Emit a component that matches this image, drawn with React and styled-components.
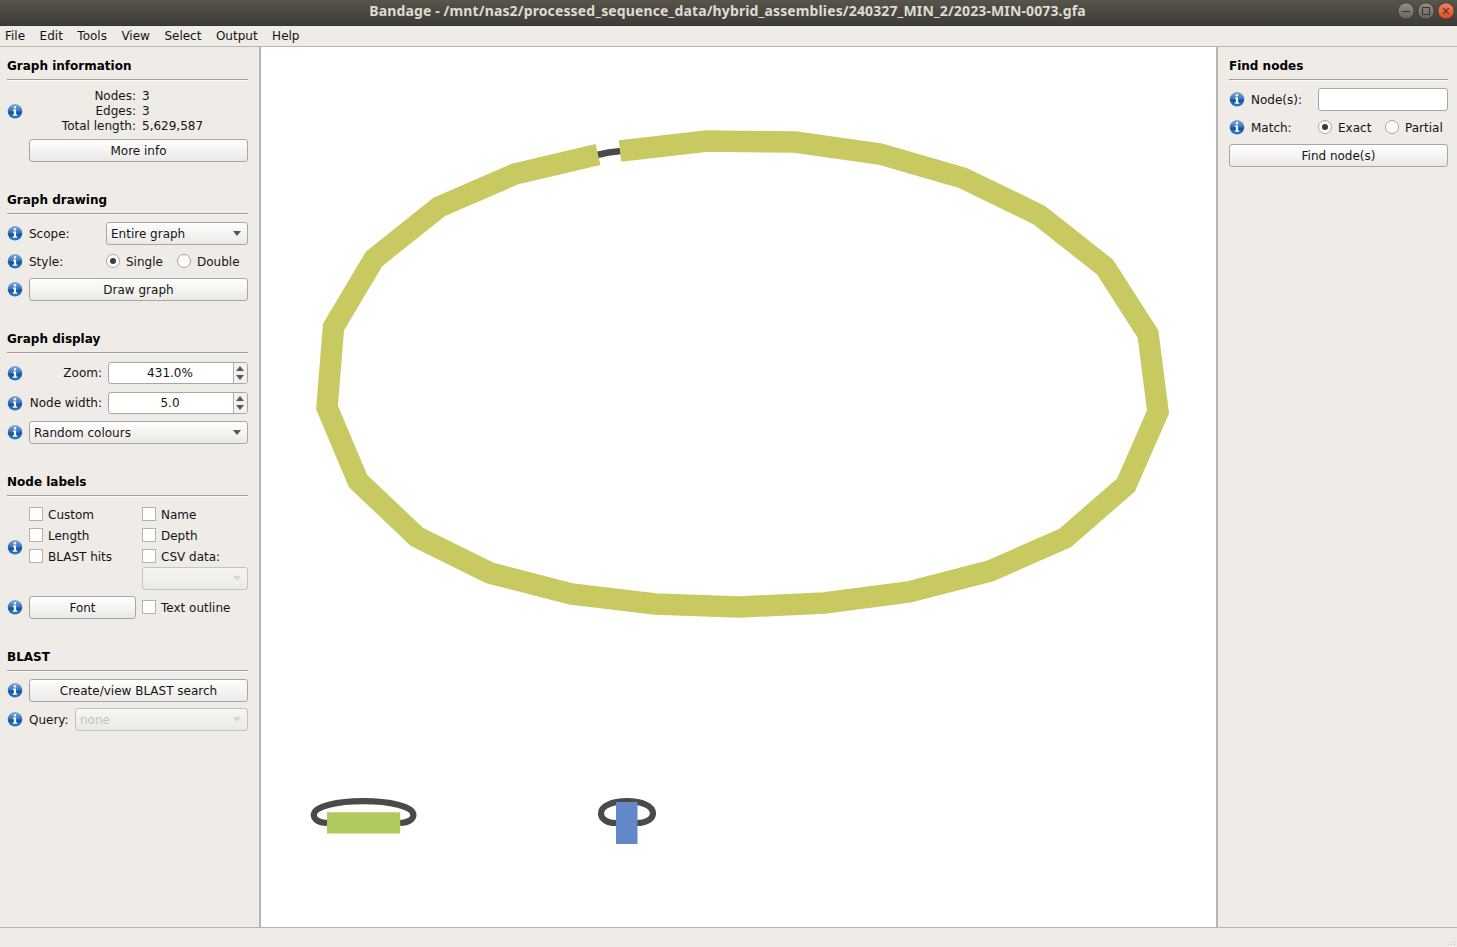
import React from 'react';
import styled, { createGlobalStyle, css } from 'styled-components';

const GlobalStyle = createGlobalStyle`
  * { box-sizing: border-box; }
  body {
    margin: 0;
    background: #efebe7;
    color: #141414;
    font: 12px/15px 'DejaVu Sans', sans-serif;
  }
`;

const Window = styled.div`
  display: flex;
  flex-direction: column;
  width: 1457px;
  height: 947px;
  overflow: hidden;
  background: #efebe7;
`;

const TitleBar = styled.header`
  display: grid;
  grid-template-columns: 58px 1fr 60px;
  align-items: center;
  flex: none;
  height: 26px;
  padding-bottom: 4px;
  background: linear-gradient(#57544b, #3e3c37);
  border-bottom: 1px solid #35332e;
`;

const Title = styled.h1`
  grid-column: 2;
  margin: 0;
  text-align: center;
  white-space: nowrap;
  color: #dfdbd2;
  font: 700 14px/22px 'Noto Sans', sans-serif;
  letter-spacing: 0.13px;
`;

const WindowButtons = styled.div`
  display: flex;
  gap: 2px;
`;

const MenuBar = styled.nav`
  display: flex;
  flex: none;
  align-items: center;
  gap: 14.5px;
  height: 21px;
  padding: 1px 5px 0;
  border-bottom: 1px solid #b8b4ae;
`;

const Body = styled.main`
  display: flex;
  flex: 1;
  min-height: 0;
`;

const SidePanel = styled.aside`
  display: flex;
  flex-direction: column;
  gap: 19px;
  flex: none;
  width: ${(p) => p.$width}px;
  padding: 0 ${(p) => p.$right}px 0 ${(p) => p.$left}px;
  border: 0 solid #b9b5b0;
  ${(p) => (p.$side === 'left' ? 'border-right-width: 2px;' : 'border-left-width: 2px;')}
`;

const Canvas = styled.section`
  flex: 1;
  min-width: 0;
  background: #fff;
  svg { display: block; }
`;

const StatusBar = styled.footer`
  display: flex;
  flex: none;
  justify-content: flex-end;
  align-items: flex-end;
  height: 20px;
  border-top: 1px solid #b8b4ae;
`;

const Group = styled.section`
  display: flex;
  flex-direction: column;
`;

const GroupTitle = styled.h2`
  height: 34px;
  margin: 0;
  padding-top: 12px;
  font: 700 12px/15px 'DejaVu Sans', sans-serif;
  color: #000;
  border-bottom: 1px solid #fbfaf8;
  box-shadow: inset 0 -1px 0 #a09c97;
`;

const Rows = styled.div`
  display: flex;
  flex-direction: column;
  gap: ${(p) => p.$gap ?? 5}px;
  padding-top: ${(p) => p.$top ?? 7}px;
`;

const Option = styled.span`
  display: flex;
  align-items: center;
  gap: ${(p) => p.$gap ?? 6}px;
  height: 14px;
  white-space: nowrap;
`;

const OptionText = styled.span`
  padding-top: 2px;
`;

const Row = styled.div`
  display: grid;
  grid-template-columns: ${(p) => p.$cols || '22px 1fr'};
  align-items: center;
  height: ${(p) => p.$h || 23}px;
  & > ${Option} { margin-bottom: 1px; }
`;

const Label = styled.span`
  white-space: nowrap;
  text-align: ${(p) => p.$align || 'left'};
  padding-top: ${(p) => (p.$align === 'right' ? 1 : 2)}px;
  padding-right: ${(p) => (p.$align === 'right' ? 6 : 0)}px;
`;

const face = css`
  height: 23px;
  border: 1px solid ${(p) => (p.$disabled ? '#c6c2bd' : '#aaa6a1')};
  border-radius: 3px;
  background: ${(p) =>
    p.$disabled ? 'linear-gradient(#f6f5f3, #eceae7)' : 'linear-gradient(#fefefe, #f6f5f4 45%, #ebe9e7)'};
  color: ${(p) => (p.$disabled ? '#c4c1bd' : '#141414')};
  font: 12px/15px 'DejaVu Sans', sans-serif;
`;

const Button = styled.button`
  ${face}
  width: 100%;
  padding: 2px 0 0;
  text-align: center;
`;

const SelectBox = styled.div`
  ${face}
  display: flex;
  align-items: center;
  justify-content: space-between;
  padding: 0 6px 0 4px;
`;

const Field = styled.div`
  display: flex;
  height: ${(p) => p.$h || 22}px;
  border: 1px solid #aaa6a1;
  border-radius: 3px;
  background: #fff;
  overflow: hidden;
`;

const FieldValue = styled.span`
  flex: 1;
  padding-right: 2px;
  text-align: center;
  line-height: 21px;
`;

const Stepper = styled.span`
  display: flex;
  flex-direction: column;
  justify-content: space-around;
  align-items: center;
  width: 14px;
  padding: 1px 1px 1px 0;
  border-left: 1px solid #b3afaa;
  background: #f3f1ef;
`;

const Stats = styled.dl`
  display: grid;
  grid-template-columns: 107px 1fr;
  column-gap: 6px;
  margin: 0;
  padding-top: 1px;
  dt { text-align: right; }
  dd { margin: 0; }
`;

const StatsRow = styled.div`
  display: grid;
  grid-template-columns: 22px 1fr;
  align-items: center;
`;

const RadioMark = styled.i`
  display: grid;
  place-items: center;
  width: 14px;
  height: 14px;
  border: 1px solid #aaa6a1;
  border-radius: 50%;
  background: #fff;
  &::after {
    content: '';
    width: 6px;
    height: 6px;
    border-radius: 50%;
    background: ${(p) => (p.$on ? '#3c3c3c' : 'transparent')};
  }
`;

const CheckMark = styled.i`
  width: 14px;
  height: 14px;
  border: 1px solid #b5b1ac;
  background: #fff;
`;

const InfoSvg = styled.svg`
  margin-bottom: 1px;
`;

const LabelOptions = styled.div`
  display: grid;
  grid-template-columns: 22px 1fr;
  align-items: center;
  padding-top: 3px;
  & > ${InfoSvg} { margin: -3px 0 0; }
`;

const OptionGrid = styled.div`
  display: grid;
  grid-template-columns: 113px 1fr;
  row-gap: 7px;
`;

const CsvSelect = styled(SelectBox)`
  grid-column: 2;
  margin-top: -3px;
`;

const InfoIcon = () => (
  <InfoSvg width="16" height="16" viewBox="0 0 16 16">
    <defs>
      <linearGradient id="info" x1="0" y1="0" x2="0" y2="1">
        <stop offset="0" stopColor="#86add9" />
        <stop offset="0.48" stopColor="#3672b8" />
        <stop offset="0.56" stopColor="#0f549f" />
        <stop offset="1" stopColor="#2f80c6" />
      </linearGradient>
    </defs>
    <circle cx="8" cy="8.3" r="7.2" fill="url(#info)" />
    <rect x="6.8" y="3.200" width="2.3" height="2.2" rx="0.6" fill="#fff" />
    <path d="M5.900 6.500h3.200v4.900h1.200v1.300H5.700v-1.300h1.200V7.800h-1z" fill="#fff" />
  </InfoSvg>
);

const Arrow = ({ up, faded }) => (
  <svg width="8" height="5" viewBox="0 0 8 4" preserveAspectRatio="none">
    <path d={up ? 'M0 4L4 0L8 4Z' : 'M0 0H8L4 4Z'} fill={faded ? '#dad7d3' : '#595653'} />
  </svg>
);

const WindowIcon = ({ kind }) => {
  const close = kind === 'close';
  return (
    <svg width="18" height="18" viewBox="0 0 18 18">
      <defs>
        <linearGradient id={`win-${kind}`} x1="0" y1="0" x2="0" y2="1">
          <stop offset="0" stopColor={close ? '#f58460' : '#929087'} />
          <stop offset="1" stopColor={close ? '#df4a1b' : '#66645c'} />
        </linearGradient>
      </defs>
      <circle cx="9" cy="9" r="8.2" fill={`url(#win-${kind})`} stroke="#34322d" strokeWidth="0.8" />
      <g fill="none" stroke="#393631" strokeWidth="1.1">
        {kind === 'min' && <path d="M5 9.500h8" />}
        {kind === 'max' && <path d="M5.500 5.500h7v7h-7z" />}
        {close && <path d="M6.200 6.200l5.600 5.600M11.800 6.200l-5.600 5.600" />}
      </g>
    </svg>
  );
};

const Select = ({ children, disabled }) => (
  <SelectBox $disabled={disabled}>
    <OptionText>{children}</OptionText>
    <Arrow faded={disabled} />
  </SelectBox>
);

const Spin = ({ value }) => (
  <Field>
    <FieldValue>{value}</FieldValue>
    <Stepper>
      <Arrow up />
      <Arrow />
    </Stepper>
  </Field>
);

const Radio = ({ on, children }) => (
  <Option>
    <RadioMark $on={on} />
    <OptionText>{children}</OptionText>
  </Option>
);

const Check = ({ children }) => (
  <Option $gap={5}>
    <CheckMark />
    <OptionText>{children}</OptionText>
  </Option>
);

const AssemblyGraph = () => (
  <svg width="955" height="880" viewBox="261 47 955 880">
    <path d="M597 155Q608 152 621 151" fill="none" stroke="#4a4a4a" strokeWidth="6.5" />
    <path
      d="M620 151L707 141L795 142L880 154L963 178L1039 215L1105 267L1148 334L1158 412L1126 485L1065 538L990 571L909 592L824 603L739 607L655 604L571 594L490 573L417 537L358 481L327 407.500L333.500 327L374 259L439 207L515 174L598 154.500"
      fill="none"
      stroke="#c9c961"
      strokeWidth="21.5"
      strokeLinejoin="miter"
    />
    <path
      d="M327 823C318 822.500 313.800 819 313.800 815C313.800 806 338 801.200 363.500 801.200C389 801.200 413.400 806 413.400 815C413.400 819 409 822.500 400 823"
      fill="none"
      stroke="#4a4a4a"
      strokeWidth="6.2"
    />
    <path d="M327 812.200H400.200V833.500H327Z" fill="#b0ca5f" />
    <path
      d="M616 823C607 823 601 819 601 813.500C601 806 612 801.200 627 801.200C642 801.200 653 806 653 813.500C653 819 646 823 637 823"
      fill="none"
      stroke="#4a4a4a"
      strokeWidth="6.2"
    />
    <path d="M616 802H637.500V844H616Z" fill="#6288c8" />
  </svg>
);

const SizeGrip = () => (
  <svg width="10" height="10" viewBox="0 0 10 10" fill="#cbc7c2">
    <path d="M7 1h1v1h-1zM4 4h1v1h-1zM7 4h1v1h-1zM1 7h1v1h-1zM4 7h1v1h-1zM7 7h1v1h-1z" />
  </svg>
);

const menus = ['File', 'Edit', 'Tools', 'View', 'Select', 'Output', 'Help'];

export default function App() {
  return (
    <Window>
      <GlobalStyle />
      <TitleBar>
        <Title>Bandage - /mnt/nas2/processed_sequence_data/hybrid_assemblies/240327_MIN_2/2023-MIN-0073.gfa</Title>
        <WindowButtons>
          <WindowIcon kind="min" />
          <WindowIcon kind="max" />
          <WindowIcon kind="close" />
        </WindowButtons>
      </TitleBar>
      <MenuBar>
        {menus.map((m) => (
          <span key={m}>{m}</span>
        ))}
      </MenuBar>
      <Body>
        <SidePanel $side="left" $width={261} $left={7} $right={11}>
          <Group>
            <GroupTitle>Graph information</GroupTitle>
            <Rows>
              <StatsRow>
                <InfoIcon />
                <Stats>
                  <dt>Nodes:</dt>
                  <dd>3</dd>
                  <dt>Edges:</dt>
                  <dd>3</dd>
                  <dt>Total length:</dt>
                  <dd>5,629,587</dd>
                </Stats>
              </StatsRow>
              <Row>
                <span />
                <Button>More info</Button>
              </Row>
            </Rows>
          </Group>
          <Group>
            <GroupTitle>Graph drawing</GroupTitle>
            <Rows>
              <Row $cols="22px 77px 1fr">
                <InfoIcon />
                <Label>Scope:</Label>
                <Select>Entire graph</Select>
              </Row>
              <Row $cols="22px 77px 71px 1fr">
                <InfoIcon />
                <Label>Style:</Label>
                <Radio on>Single</Radio>
                <Radio>Double</Radio>
              </Row>
              <Row>
                <InfoIcon />
                <Button>Draw graph</Button>
              </Row>
            </Rows>
          </Group>
          <Group>
            <GroupTitle>Graph display</GroupTitle>
            <Rows $top={8} $gap={8}>
              <Row $h={22} $cols="22px 79px 1fr">
                <InfoIcon />
                <Label $align="right">Zoom:</Label>
                <Spin value="431.0%" />
              </Row>
              <Row $h={22} $cols="22px 79px 1fr">
                <InfoIcon />
                <Label $align="right">Node width:</Label>
                <Spin value="5.0" />
              </Row>
            </Rows>
            <Rows>
              <Row>
                <InfoIcon />
                <Select>Random colours</Select>
              </Row>
            </Rows>
          </Group>
          <Group>
            <GroupTitle>Node labels</GroupTitle>
            <Rows $gap={6}>
              <LabelOptions>
                <InfoIcon />
                <OptionGrid>
                  <Check>Custom</Check>
                  <Check>Name</Check>
                  <Check>Length</Check>
                  <Check>Depth</Check>
                  <Check>BLAST hits</Check>
                  <Check>CSV data:</Check>
                  <CsvSelect $disabled>
                    <span />
                    <Arrow faded />
                  </CsvSelect>
                </OptionGrid>
              </LabelOptions>
              <Row $cols="22px 107px 6px 1fr">
                <InfoIcon />
                <Button>Font</Button>
                <span />
                <Check>Text outline</Check>
              </Row>
            </Rows>
          </Group>
          <Group>
            <GroupTitle>BLAST</GroupTitle>
            <Rows $gap={6}>
              <Row>
                <InfoIcon />
                <Button>Create/view BLAST search</Button>
              </Row>
              <Row $cols="22px 46px 1fr">
                <InfoIcon />
                <Label>Query:</Label>
                <Select disabled>none</Select>
              </Row>
            </Rows>
          </Group>
        </SidePanel>
        <Canvas>
          <AssemblyGraph />
        </Canvas>
        <SidePanel $side="right" $width={241} $left={11} $right={9}>
          <Group>
            <GroupTitle>Find nodes</GroupTitle>
            <Rows>
              <Row $cols="22px 67px 1fr">
                <InfoIcon />
                <Label>Node(s):</Label>
                <Field $h={23} />
              </Row>
              <Row $cols="22px 67px 67px 1fr">
                <InfoIcon />
                <Label>Match:</Label>
                <Radio on>Exact</Radio>
                <Radio>Partial</Radio>
              </Row>
              <Row $cols="1fr">
                <Button>Find node(s)</Button>
              </Row>
            </Rows>
          </Group>
        </SidePanel>
      </Body>
      <StatusBar>
        <SizeGrip />
      </StatusBar>
    </Window>
  );
}
